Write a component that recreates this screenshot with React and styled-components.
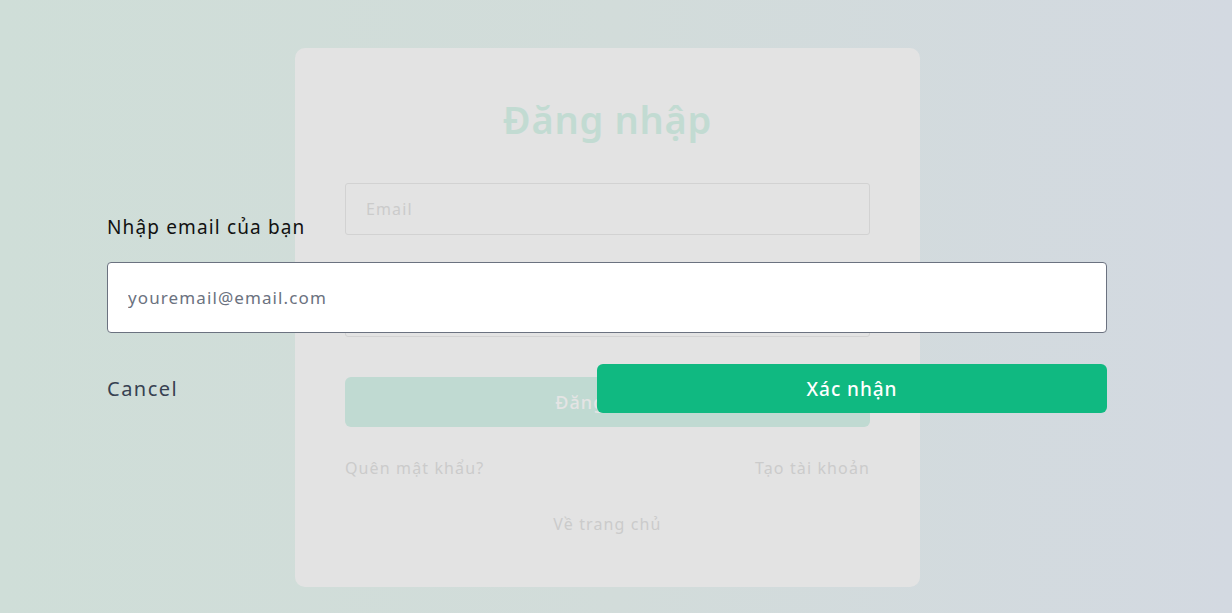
import React from "react";
import styled, { createGlobalStyle } from "styled-components";

const Global = createGlobalStyle`
  html, body { margin: 0; padding: 0; }
  body {
    font-family: "Noto Sans", "Open Sans", sans-serif;
    letter-spacing: 0.07em;
    background: linear-gradient(90deg, #cfded8 0%, #d2dcda 50%, #d3d9e1 100%);
    min-height: 613px;
    overflow: hidden;
  }
  * { box-sizing: border-box; }
`;

const Page = styled.div`
  position: relative;
  width: 1215px;
  height: 613px;
  display: flex;
  justify-content: center;
  padding-top: 48px;
`;

const Card = styled.div`
  width: 625px;
  height: 539px;
  background: #e3e3e3;
  border-radius: 10px;
  padding: 44px 50px 0;
  display: flex;
  flex-direction: column;
`;

const Title = styled.h1`
  margin: 0;
  text-align: center;
  font-size: 38px;
  font-weight: 600;
  letter-spacing: 0.02em;
  color: #c2dbd2;
  line-height: 54px;
`;

const FakeInput = styled.div`
  height: 52px;
  border: 1px solid #d2d2d2;
  border-radius: 3px;
  margin-top: ${(p) => p.$mt}px;
  display: flex;
  align-items: center;
  padding-left: 20px;
  font-size: 16px;
  color: #cbcbcb;
`;

const LoginButton = styled.div`
  margin-top: 40px;
  height: 50px;
  border-radius: 6px;
  background: #c0dad2;
  color: #e4e4e4;
  font-size: 18px;
  font-weight: 500;
  display: flex;
  align-items: center;
  justify-content: center;
`;

const LinkRow = styled.div`
  margin-top: 30px;
  display: flex;
  justify-content: space-between;
  font-size: 16px;
  color: #cbcbcb;
`;

const CenterLink = styled.div`
  margin-top: 34px;
  text-align: center;
  font-size: 16px;
  color: #cbcbcb;
`;

const Modal = styled.div`
  position: absolute;
  left: 107px;
  top: 214px;
  width: 1000px;
  display: flex;
  flex-direction: column;
`;

const Label = styled.label`
  font-size: 19px;
  letter-spacing: 0.06em;
  color: #111;
  line-height: 27px;
`;

const EmailInput = styled.input`
  margin-top: 21px;
  height: 71px;
  width: 100%;
  border: 1px solid #6b7280;
  border-radius: 4px;
  background: #fff;
  padding: 0 20px;
  font-family: inherit;
  font-size: 17px;
  letter-spacing: 0.065em;
  color: #111;
  outline: none;
  &::placeholder { color: #6b7280; }
`;

const Actions = styled.div`
  margin-top: 31px;
  display: flex;
  justify-content: space-between;
  align-items: flex-start;
`;

const CancelButton = styled.button`
  background: none;
  border: none;
  padding: 0;
  margin-top: 11px;
  font-family: inherit;
  font-size: 20px;
  letter-spacing: 0.075em;
  color: #374151;
  cursor: pointer;
`;

const ConfirmButton = styled.button`
  width: 510px;
  height: 49px;
  border: none;
  border-radius: 6px;
  background: #10b981;
  color: #fff;
  font-family: inherit;
  font-size: 19px;
  font-weight: 500;
  letter-spacing: 0.05em;
  cursor: pointer;
`;

export default function App() {
  return (
    <>
      <Global />
      <Page>
        <Card>
          <Title>Đăng nhập</Title>
          <FakeInput $mt={37}>Email</FakeInput>
          <FakeInput $mt={50}>Mật khẩu</FakeInput>
          <LoginButton>Đăng nhập</LoginButton>
          <LinkRow>
            <span>Quên mật khẩu?</span>
            <span>Tạo tài khoản</span>
          </LinkRow>
          <CenterLink>Về trang chủ</CenterLink>
        </Card>
        <Modal>
          <Label htmlFor="email">Nhập email của bạn</Label>
          <EmailInput id="email" placeholder="youremail@email.com" />
          <Actions>
            <CancelButton>Cancel</CancelButton>
            <ConfirmButton>Xác nhận</ConfirmButton>
          </Actions>
        </Modal>
      </Page>
    </>
  );
}
